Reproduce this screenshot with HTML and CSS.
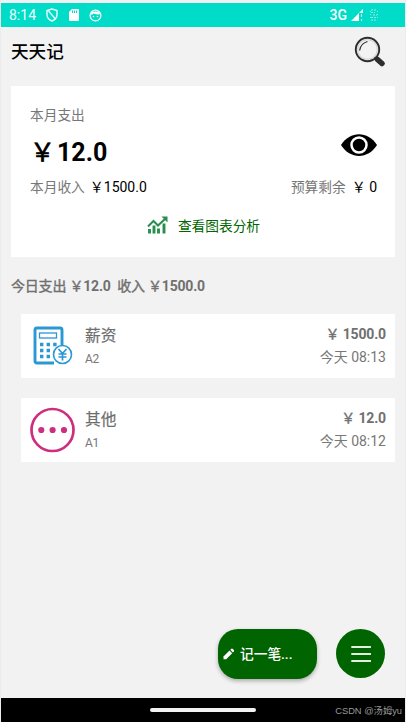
FILE: index.html
```html
<!DOCTYPE html>
<html lang="zh-CN">
<head>
<meta charset="utf-8">
<title>天天记</title>
<link rel="stylesheet" href="styles.css">
</head>
<body>
<div class="phone">
  <header class="status">
    <span class="clock">8:14</span>
    <svg class="s-shield" width="12" height="14" viewBox="0 0 12 14" fill="none" stroke="#e9fffb" stroke-width="1.4"><path d="M6 1 11 2.6V6.5C11 9.6 9 11.9 6 13 3 11.9 1 9.6 1 6.5V2.6Z"/><path d="M2.5 3 9.5 11"/></svg>
    <svg class="s-sd" width="10" height="12" viewBox="0 0 10 12"><path d="M3 0H9Q10 0 10 1V11Q10 12 9 12H1Q0 12 0 11V3Z" fill="#fff"/><path d="M3.5 1.5V4M5.5 1.5V4M7.5 1.5V4" stroke="#00dcc8"/></svg>
    <svg class="s-face" width="13" height="13" viewBox="0 0 13 13"><circle cx="6.500" cy="6.500" r="5.400" fill="none" stroke="#fff" stroke-width="1.200"/><path d="M1.500 5.500C3 6 4 4.800 5 4.500 7 5.500 9 5.500 11.500 5.300L10 2.500H3Z" fill="#fff"/><circle cx="4.500" cy="7.500" r=".8" fill="#fff"/><circle cx="8.500" cy="7.500" r=".8" fill="#fff"/></svg>
    <span class="net">3G</span>
    <svg class="s-signal" width="13" height="12" viewBox="0 0 13 12"><path d="M0 12 12 0V4H8V12Z" fill="#fff"/><path d="M10.500 5V8M10.500 10V12" stroke="#b5f5ee" stroke-width="1.200"/></svg>
    <svg class="s-battery" width="8" height="12" viewBox="0 0 8 12" fill="none" stroke="#8deee3"><path d="M1 1H7M1 11H7M1 3.500H5M3 6H7M1 8.500H6" stroke-dasharray="2 1"/><path d="M.5 2V11M7.500 2V11" stroke-dasharray="1 2"/></svg>
  </header>

  <div class="title-bar">
    <h1>天天记</h1>
    <svg width="32" height="32" viewBox="0 0 32 32" fill="none"><circle cx="13.500" cy="13.500" r="11.700" stroke="#2d2d2d" stroke-width="1.900"/><circle cx="13.500" cy="13.500" r="9.800" stroke="#b5b5b5" stroke-width=".6"/><path d="M5.600 14.500Q6.500 7.500 13.500 5.500" stroke="#333" stroke-width="1.300"/><path d="M20.500 21.500 23 24" stroke="#2d2d2d" stroke-width="2"/><path d="M23.500 23.500 28 27.500" stroke="#2d2d2d" stroke-width="5.500" stroke-linecap="round"/></svg>
  </div>

  <section class="summary">
    <div class="label">本月支出</div>
    <div class="total-row">
      <div class="total">￥<b>12.0</b></div>
      <svg width="36" height="22" viewBox="0 0 36 22"><path d="M0 11C9-3.500 27-3.500 36 11 27 25.500 9 25.500 0 11Z"/><circle cx="18" cy="11" r="7.500" fill="none" stroke="#fff" stroke-width="2.500"/></svg>
    </div>
    <div class="income-row">
      <div><span class="label">本月收入</span><span class="income">￥1500.0</span></div>
      <div><span class="label">预算剩余</span><span class="budget">￥ 0</span></div>
    </div>
    <div class="chart-link">
      <svg width="22" height="18" viewBox="0 0 22 18"><path d="M1 10.500 6.500 5 11 9.500 18.500 2.500" fill="none" stroke="#278e4d" stroke-width="2"/><path d="M14.500.5H20.500V6.500Z" fill="#278e4d"/><path d="M2.500 13V17.500M7 9.500V17.500M11.500 12.500V17.500M17 7.500V17.500" stroke="#278e4d" stroke-width="2.900"/></svg>
      <span>查看图表分析</span>
    </div>
  </section>

  <div class="today">今日支出 ￥<b>12.0</b>&nbsp; 收入 ￥<b>1500.0</b></div>

  <article class="record">
    <svg class="r-icon" width="46" height="46" viewBox="0 0 46 46" fill="none" stroke="#2b97d3"><path d="M32 22V7Q32 5 30 5H7Q5 5 5 7V38Q5 40 7 40H24" stroke-width="2.900"/><rect x="9.500" y="10" width="17" height="5" stroke-width="1.300"/><path d="M10 21.500H27M10 27.500H21M10 33.500H21" stroke-width="3.400" stroke-dasharray="3.400 3.200"/><circle cx="32.500" cy="31.500" r="9" stroke-width="1.600"/><path d="M28.500 26 32.500 30.500 36.500 26M32.500 30V37.500M28.500 31H36.500M28.500 34H36.500" stroke-width="1.700"/></svg>
    <div class="info"><div class="name">薪资</div><div class="note">A2</div></div>
    <div class="value"><div class="amount">￥ <b>1500.0</b></div><div class="time">今天 08:13</div></div>
  </article>

  <article class="record">
    <svg class="r-icon" width="46" height="46" viewBox="0 0 46 46"><circle cx="22.500" cy="23" r="21" fill="none" stroke="#cd2e7d" stroke-width="2.700"/><g fill="#cd2e7d"><circle cx="11.300" cy="23" r="3.100"/><circle cx="22.600" cy="23" r="3.100"/><circle cx="34" cy="23" r="3.100"/></g></svg>
    <div class="info"><div class="name">其他</div><div class="note">A1</div></div>
    <div class="value"><div class="amount">￥ <b>12.0</b></div><div class="time">今天 08:12</div></div>
  </article>

  <div class="actions">
    <div class="add">
      <svg width="12" height="12" viewBox="0 0 12 12" fill="#fff"><path d="M.5 8.500 6.500 2.500 9.200 5.200 3.200 11.200H.5Z"/><path d="M7.300 1.800 8.500.7Q9.200.3 9.800.9L10.900 2Q11.400 2.700 10.900 3.300L9.900 4.400Z"/></svg>
      <span>记一笔...</span>
    </div>
    <div class="more"><svg width="20" height="18" viewBox="0 0 20 18"><path d="M1 2H19.500M1 9H19.500M1 16H19.500" stroke="#e2f0e2" stroke-width="1.900" stroke-linecap="round"/></svg></div>
  </div>

  <footer class="nav"><div class="handle"></div><span>CSDN @汤姆yu</span></footer>
</div>
</body>
</html>
```

FILE: styles.css
```css
* { box-sizing: border-box; }
body {
  margin: 0;
  background: #ececec;
  font-family: Roboto, "Noto Sans CJK SC", sans-serif;
}
svg { display: block; flex: none; }
b { font-weight: 700; -webkit-text-stroke: 0; }
.phone {
  display: flex;
  flex-direction: column;
  width: 404px;
  height: 722px;
  margin: 0 1px;
  padding-top: 3px;
  background: #f2f2f2;
  white-space: nowrap;
  overflow: hidden;
}
.status {
  display: flex;
  align-items: center;
  height: 24px;
  padding: 0 27px 0 8px;
  background: #00dcc8;
  color: #e9fffb;
}
.clock { width: 37px; font-size: 14px; }
.s-sd { margin-left: 11px; }
.s-face { margin-left: 10px; }
.net { margin-left: auto; font-size: 14px; font-weight: 500; color: #fff; }
.s-signal { margin-left: 4px; }
.s-battery { margin-left: 6px; }
.title-bar {
  display: flex;
  justify-content: space-between;
  align-items: center;
  height: 49px;
  padding: 0 19px 0 10px;
}
h1 { margin: 0; font-size: 17.6px; font-weight: 500; line-height: 26px; }
.summary {
  height: 171px;
  margin: 10px 10px 0 10px;
  padding: 19px 18px 0 19px;
  background: #fff;
}
.label { color: #777; font-size: 13.7px; line-height: 20px; }
.total-row {
  display: flex;
  justify-content: space-between;
  height: 52px;
}
.total {
  padding-top: 10px;
  font-size: 25px;
  line-height: 36px;
  -webkit-text-stroke: .7px;
}
.total b { margin-left: 2px; }
.total-row svg { margin-top: 9px; }
.income-row {
  display: flex;
  justify-content: space-between;
  height: 20px;
  font-size: 14px;
  line-height: 20px;
}
.income { margin-left: 5px; }
.budget { margin-left: 6px; }
.chart-link {
  display: flex;
  align-items: center;
  justify-content: center;
  gap: 9px;
  height: 20px;
  margin-top: 18px;
  color: #006400;
  font-size: 13.7px;
}
.today {
  height: 20px;
  margin: 19px 10px 18px;
  color: #707070;
  font-size: 14px;
  line-height: 20px;
  letter-spacing: -.2px;
  -webkit-text-stroke: .4px;
}
.record {
  display: flex;
  height: 64px;
  margin: 0 10px 20px 20px;
  padding: 9px 9px 0 9px;
  background: #fff;
  color: #777;
}
.info { margin-left: 9px; }
.name { padding-top: 1px; height: 24px; font-size: 15.7px; line-height: 24px; color: #6d6d6d; -webkit-text-stroke: .2px; }
.note { margin-top: 4px; font-size: 12px; line-height: 17px; letter-spacing: -.3px; }
.value { margin-left: auto; text-align: right; font-size: 14px; }
.amount { height: 22px; line-height: 22px; color: #707070; letter-spacing: -.15px; -webkit-text-stroke: .4px; }
.time { height: 22px; line-height: 25px; }
.actions {
  display: flex;
  justify-content: flex-end;
  gap: 19px;
  margin-top: auto;
  padding: 0 20px 19px 0;
}
.add {
  display: flex;
  align-items: center;
  width: 99px;
  height: 50px;
  padding-left: 5px;
  border-radius: 20px;
  background: #006400;
  box-shadow: 0 2px 4px rgba(0, 0, 0, .3);
  color: #fff;
  font-size: 13.7px;
  font-weight: 500;
}
.add span { margin-left: 5px; padding-bottom: 2px; }
.more {
  display: grid;
  place-items: center;
  width: 49px;
  height: 49px;
  border-radius: 50%;
  background: #006400;
}
.nav {
  display: grid;
  grid-template-columns: 149px 106px 1fr;
  align-items: center;
  height: 24px;
  background: #000;
}
.handle { grid-column: 2; height: 4px; border-radius: 2px; background: #f2f2f2; }
.nav span {
  justify-self: end;
  padding-right: 3px;
  color: #999;
  font-family: "Liberation Sans", "Noto Sans CJK SC", sans-serif;
  font-size: 9.3px;
}
```
